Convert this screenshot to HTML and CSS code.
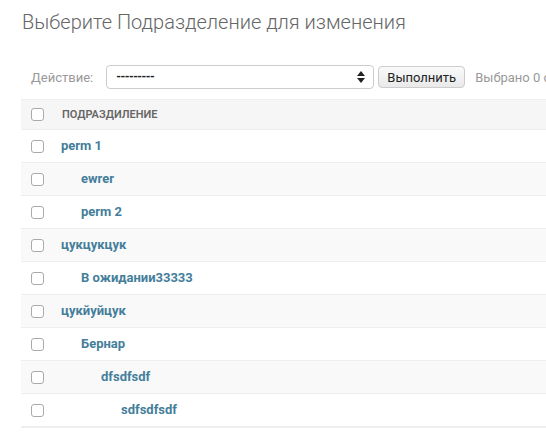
FILE: index.html
```html
<!DOCTYPE html>
<html lang="ru">
<head>
    <meta charset="UTF-8">
    <title>Выберите Подразделение для изменения</title>
    <link rel="stylesheet" href="styles.css">
</head>
<body>
    <!-- Контент -->
    <div id="content">
        <h1>Выберите Подразделение для изменения</h1>

        <div id="changelist">
            <!-- Действия -->
            <div class="actions">
                <label class="action-label">Действие:</label>
                <div class="select">
                    <span>---------</span>
                    <svg class="arrows" width="8" height="12" viewBox="0 0 8 12">
                        <path d="M4 0 L8 5 L0 5 Z" fill="#222"/>
                        <path d="M4 12 L8 7 L0 7 Z" fill="#222"/>
                    </svg>
                </div>
                <button class="button">Выполнить</button>
                <span class="action-counter">Выбрано 0 объектов из 9</span>
            </div>

            <!-- Таблица -->
            <table id="result_list">
                <thead>
                    <tr>
                        <th class="action-checkbox"><input type="checkbox"></th>
                        <th class="column">Подраздиление</th>
                    </tr>
                </thead>
                <tbody>
                    <tr><td class="action-checkbox"><input type="checkbox"></td><td class="level-0"><a href="#">perm 1</a></td></tr>
                    <tr><td class="action-checkbox"><input type="checkbox"></td><td class="level-1"><a href="#">ewrer</a></td></tr>
                    <tr><td class="action-checkbox"><input type="checkbox"></td><td class="level-1"><a href="#">perm 2</a></td></tr>
                    <tr><td class="action-checkbox"><input type="checkbox"></td><td class="level-0"><a href="#">цукцукцук</a></td></tr>
                    <tr><td class="action-checkbox"><input type="checkbox"></td><td class="level-1"><a href="#">В ожидании33333</a></td></tr>
                    <tr><td class="action-checkbox"><input type="checkbox"></td><td class="level-0"><a href="#">цукйуйцук</a></td></tr>
                    <tr><td class="action-checkbox"><input type="checkbox"></td><td class="level-1"><a href="#">Бернар</a></td></tr>
                    <tr><td class="action-checkbox"><input type="checkbox"></td><td class="level-2"><a href="#">dfsdfsdf</a></td></tr>
                    <tr><td class="action-checkbox"><input type="checkbox"></td><td class="level-3"><a href="#">sdfsdfsdf</a></td></tr>
                </tbody>
            </table>
        </div>
    </div>
</body>
</html>
```

FILE: styles.css
```css
/* Общие стили */
body, html {
    margin: 0;
    padding: 0;
    overflow: hidden;
    background: #fff;
    font-family: Roboto, "Liberation Sans", Arial, sans-serif;
    color: #333;
    font-size: 13px;
}

#content {
    padding: 10px 21px 0;
    width: 700px;
}

h1 {
    margin: 0 0 21px;
    font-size: 20px;
    font-weight: 300;
    color: #666;
    padding-left: 1px;
}

/* Панель действий */
.actions {
    display: flex;
    align-items: center;
    padding: 10px;
    height: 24px;
}

.action-label {
    color: #999;
    margin-right: 13px;
}

.select {
    position: relative;
    box-sizing: border-box;
    width: 268px;
    height: 24px;
    border: 1px solid #ccc;
    border-radius: 4px;
    display: flex;
    align-items: center;
    padding-left: 9px;
    font-size: 12px;
    font-weight: bold;
    color: #222;
    letter-spacing: -0.5px;
}

.select .arrows {
    position: absolute;
    right: 8px;
    top: 5px;
}

.button {
    box-sizing: border-box;
    margin-left: 4px;
    height: 22px;
    width: 87px;
    padding: 0;
    border: 1px solid #ccc;
    border-radius: 4px;
    background: linear-gradient(#fafafa, #e9e9e9);
    font-family: inherit;
    font-size: 13px;
    color: #222;
}

.action-counter {
    margin-left: 10px;
    color: #999;
    white-space: nowrap;
}

/* Таблица */
#result_list {
    width: 100%;
    border-collapse: collapse;
    border-bottom: 2px solid #eee;
}

#result_list th {
    background: #f6f6f6;
    border-top: 1px solid #eee;
    border-bottom: 1px solid #eee;
    height: 29px;
    padding: 0;
    text-align: left;
    font-size: 11px;
    font-weight: 600;
    text-transform: uppercase;
    color: #666;
}

#result_list th.column {
    padding-left: 1px;
}

#result_list td {
    height: 16px;
    padding: 8px 0;
    border-bottom: 1px solid #eee;
    line-height: 16px;
}

#result_list tbody tr:nth-child(even) {
    background: #f9f9f9;
}

#result_list tbody tr:last-child td {
    border-bottom: none;
}

.action-checkbox {
    width: 40px;
    box-sizing: border-box;
    padding-left: 10px !important;
}

input[type="checkbox"] {
    appearance: none;
    display: block;
    margin: 0;
    width: 13px;
    height: 13px;
    border: 1px solid #aaa;
    border-radius: 3px;
    background: #fff;
    box-sizing: border-box;
}

a {
    color: #447e9b;
    font-weight: bold;
    text-decoration: none;
}

.level-1 { padding-left: 20px !important; }
.level-2 { padding-left: 40px !important; }
.level-3 { padding-left: 60px !important; }
```
